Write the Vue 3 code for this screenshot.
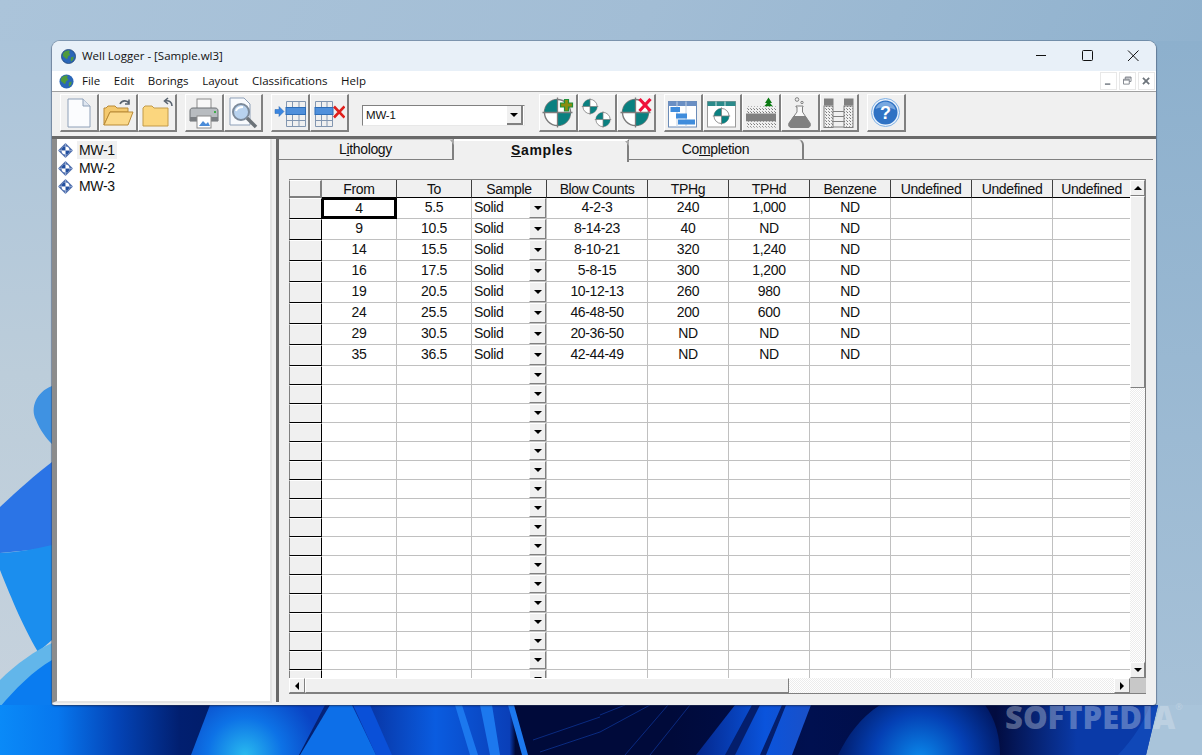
<script setup>
const menus = ['File', 'Edit', 'Borings', 'Layout', 'Classifications', 'Help']
const borings = ['MW-1', 'MW-2', 'MW-3']
const columns = [
  { name: 'From', w: 75 }, { name: 'To', w: 75 }, { name: 'Sample', w: 75 }, { name: 'Blow Counts', w: 101 },
  { name: 'TPHg', w: 81 }, { name: 'TPHd', w: 81 }, { name: 'Benzene', w: 81 },
  { name: 'Undefined', w: 81 }, { name: 'Undefined', w: 81 }, { name: 'Undefined', w: 78 }
]
const filled = [
  ['4', '5.5', 'Solid', '4-2-3', '240', '1,000', 'ND'],
  ['9', '10.5', 'Solid', '8-14-23', '40', 'ND', 'ND'],
  ['14', '15.5', 'Solid', '8-10-21', '320', '1,240', 'ND'],
  ['16', '17.5', 'Solid', '5-8-15', '300', '1,200', 'ND'],
  ['19', '20.5', 'Solid', '10-12-13', '260', '980', 'ND'],
  ['24', '25.5', 'Solid', '46-48-50', '200', '600', 'ND'],
  ['29', '30.5', 'Solid', '20-36-50', 'ND', 'ND', 'ND'],
  ['35', '36.5', 'Solid', '42-44-49', 'ND', 'ND', 'ND']
]
const rows = [...filled.map(r => ({ cells: r, tall: true })), ...Array.from({ length: 17 }, () => ({ cells: [], tall: false }))]
const gridCols = '33px ' + columns.map(c => c.w + 'px').join(' ')
</script>

<template>
  <div class="desktop">
    <svg class="wallpaper" viewBox="0 0 1202 755" preserveAspectRatio="none">
      <defs>
        <linearGradient id="sky" x1="0" y1="0" x2="1" y2="0.3">
          <stop offset="0" stop-color="#abc4da" />
          <stop offset="0.5" stop-color="#a2bdd5" />
          <stop offset="1" stop-color="#8db0cd" />
        </linearGradient>
        <linearGradient id="leftSky" x1="0" y1="0" x2="0" y2="1">
          <stop offset="0" stop-color="#abc4da" />
          <stop offset="0.5" stop-color="#bccdda" />
          <stop offset="1" stop-color="#c6d2dd" />
        </linearGradient>
        <linearGradient id="rightSky" x1="0" y1="0" x2="0" y2="1">
          <stop offset="0" stop-color="#8db0cd" />
          <stop offset="1" stop-color="#a8c2d8" />
        </linearGradient>
        <linearGradient id="band" x1="0" y1="0" x2="1" y2="0">
          <stop offset="0" stop-color="#0a8af8" />
          <stop offset="0.05" stop-color="#0777ee" />
          <stop offset="0.1" stop-color="#0445b8" />
          <stop offset="0.155" stop-color="#011f70" />
          <stop offset="0.25" stop-color="#01185c" />
          <stop offset="0.31" stop-color="#08309c" />
          <stop offset="0.376" stop-color="#0a5ce0" />
          <stop offset="0.44" stop-color="#0a3fb8" />
          <stop offset="0.445" stop-color="#000a3a" />
          <stop offset="0.58" stop-color="#000a3a" />
          <stop offset="0.7" stop-color="#001050" />
          <stop offset="0.86" stop-color="#020c40" />
          <stop offset="0.93" stop-color="#0a3aa8" />
        </linearGradient>
        <radialGradient id="bloomA" gradientUnits="userSpaceOnUse" cx="245" cy="755" r="75">
          <stop offset="0" stop-color="#28b9ef" />
          <stop offset="0.5" stop-color="#0d72e6" />
          <stop offset="1" stop-color="#0a44c4" />
        </radialGradient>
        <radialGradient id="bloomB" gradientUnits="userSpaceOnUse" cx="920" cy="760" r="85">
          <stop offset="0" stop-color="#0a8aec" />
          <stop offset="0.55" stop-color="#0440b4" />
          <stop offset="1" stop-color="#011a66" />
        </radialGradient>
        <linearGradient id="stripe" x1="0" y1="0" x2="1" y2="0">
          <stop offset="0" stop-color="#04278c" />
          <stop offset="0.6" stop-color="#0a54dc" />
          <stop offset="1" stop-color="#1a50c8" />
        </linearGradient>
      </defs>
      <rect width="1202" height="755" fill="url(#sky)" />
      <rect x="0" y="41" width="52" height="664" fill="url(#leftSky)" />
      <rect x="1156" y="41" width="46" height="714" fill="url(#rightSky)" />
      <path d="M52 386C36 392 30 408 36 420C40 430 46 438 52 444Z" fill="#3f92e2" />
      <path d="M0 507C18 490 36 474 52 462V548L0 553Z" fill="#2b74e6" />
      <path d="M0 553C18 552 36 549 52 545V640L38 652C22 625 8 590 0 570Z" fill="#1b8eee" />
      <path d="M0 680C16 664 36 650 52 643V705H0Z" fill="#62b6ea" />
      <path d="M0 707C14 690 34 670 52 660V705H0Z" fill="#0a7cf0" />
      <rect x="0" y="705" width="1158" height="50" fill="url(#band)" />
      <path d="M210 705H325L299 755H191Z" fill="url(#bloomA)" />
      <path d="M330 705H352L376 755H320L300 755Z" fill="#0d6fe8" />
      <path d="M353 705H370L392 755H376Z" fill="#0a50d8" />
      <path d="M455 705H462L478 755H470ZM480 705H492L500 755H490ZM508 705H514L528 755H522Z" fill="#1c78ee" />
      <path d="M533 740L600 717M540 752L600 732M600 715L625 705M600 732L650 705M625 755L668 705M650 755L690 705" stroke="#0a2a80" fill="none" />
      <path d="M696 755L735 705H811L792 755Z" fill="url(#stripe)" />
      <path d="M725 755L752 705H760L735 755ZM760 755L782 705H786L766 755Z" fill="#041e6c" />
      <path d="M838 755C848 735 860 718 880 705H985C996 720 1000 738 1000 755Z" fill="url(#bloomB)" />
      <path d="M1146 755L1158 705H1202V755Z" fill="#a9c4da" />
      <path d="M1118 755C1134 738 1144 722 1150 705L1158 705L1146 755Z" fill="#1048b8" />
    </svg>

    <div class="window">
      <div class="titlebar">
        <svg class="globe" viewBox="0 0 16 16">
          <circle cx="8" cy="8" r="7.500" fill="#2a66b8" />
          <path d="M3 3.500C5 1.500 8 1 9.500 2L8.500 4L10 6L7.500 8L6.500 11L4.500 9.500L2 7.500C1.800 6 2.200 4.600 3 3.500ZM10.500 9L13.500 8L13 11.500L10.500 13.500Z" fill="#4f9a3c" />
          <circle cx="8" cy="8" r="7.500" fill="none" stroke="#1a3f70" stroke-width="0.8" />
        </svg>
        <span class="title">Well Logger - [Sample.wl3]</span>
        <div class="caption">
          <svg viewBox="0 0 46 30"><path d="M18 14.500H28" stroke="#111" /></svg>
          <svg viewBox="0 0 46 30"><rect x="18.500" y="9.500" width="10" height="10" rx="1" fill="none" stroke="#111" /></svg>
          <svg viewBox="0 0 46 30"><path d="M18 9.500L28.500 20M28.500 9.500L18 20" stroke="#111" /></svg>
        </div>
      </div>

      <div class="menubar">
        <svg class="globe small" viewBox="0 0 16 16">
          <circle cx="8" cy="8" r="7.500" fill="#2a66b8" />
          <path d="M3 3.500C5 1.500 8 1 9.500 2L8.500 4L10 6L7.500 8L6.500 11L4.500 9.500L2 7.500C1.800 6 2.200 4.600 3 3.500ZM10.500 9L13.500 8L13 11.500L10.500 13.500Z" fill="#4f9a3c" />
        </svg>
        <span v-for="m in menus" :key="m" class="menu">{{ m }}</span>
        <div class="mdi">
          <span class="mdi-btn"><svg viewBox="0 0 16 18"><path d="M4 12.500H10" stroke="#8a9097" stroke-width="2" /></svg></span>
          <span class="mdi-btn"><svg viewBox="0 0 16 18"><path d="M5.500 7V4.500H12V9.500H10M3.500 7H10V12.500H3.500Z M3.500 8H10M5.500 5.500H12" fill="none" stroke="#7a8087" /></svg></span>
          <span class="mdi-btn"><svg viewBox="0 0 16 18"><path d="M4 5.500L11 12.500M11 5.500L4 12.500" stroke="#6d747b" stroke-width="2" /></svg></span>
        </div>
      </div>

      <div class="toolbar">
        <div class="group">
          <button class="tool">
            <svg viewBox="0 0 32 32"><path d="M5 2H20L27 9V30H5Z" fill="#fbfcfe" stroke="#8ea0b8" /><path d="M20 2V9H27" fill="#dfe6f0" stroke="#8ea0b8" /></svg>
          </button>
          <button class="tool">
            <svg viewBox="0 0 32 32"><path d="M2 28V11H4L6 9H13L15 11H26V15H8Z" fill="#f4c96e" stroke="#b98a36" /><path d="M2 28L8 15H31L26 28Z" fill="#fbd98a" stroke="#b98a36" /><path d="M18 7C20 3 25 3 27 6M27 2.500V7H23" fill="none" stroke="#5a6470" stroke-width="1.600" /></svg>
          </button>
          <button class="tool">
            <svg viewBox="0 0 32 32"><path d="M2 29V11L4 9H11L13 11H27V29Z" fill="#fbd67e" stroke="#c29a48" /><path d="M31 9C31 5 28 3 24 4M27 1L23.500 4L27 7" fill="none" stroke="#5a6470" stroke-width="1.600" /></svg>
          </button>
        </div>
        <div class="group">
          <button class="tool">
            <svg viewBox="0 0 32 32"><rect x="9" y="2" width="14" height="10" fill="#f8f8f8" stroke="#8a8a8a" /><path d="M2 14C2 12 3 11 5 11H27C29 11 30 12 30 14V24H2Z" fill="#b8bcc0" stroke="#6a6e72" /><rect x="2" y="20" width="28" height="4" fill="#7a7e82" /><rect x="26" y="14" width="2" height="2" fill="#3fae4a" /><rect x="9" y="19" width="14" height="12" fill="#fff" stroke="#8a8a8a" /><path d="M11 29L15 24L18 27L20 25L22 29Z" fill="#4b8cd8" /></svg>
          </button>
          <button class="tool">
            <svg viewBox="0 0 32 32"><path d="M3 1H17L23 7V28H3Z" fill="#f8fafd" stroke="#8ea0b8" /><circle cx="14" cy="15" r="8" fill="#b8d2ee" stroke="#7c8a9a" stroke-width="2" /><path d="M9 14C10 11 13 10 16 10" stroke="#fff" stroke-width="2" fill="none" /><path d="M20 21L29 30" stroke="#6c7278" stroke-width="3.500" /></svg>
          </button>
        </div>
        <div class="group">
          <button class="tool">
            <svg viewBox="0 0 32 32"><path d="M12.500 4.500H31.500M12.500 23.500H31.500M12.500 29.500H31.500M12.500 4.500V29.500M18.500 4.500V29.500M25 4.500V29.500M31.500 4.500V29.500" fill="none" stroke="#8296b0" /><rect x="12" y="10.500" width="19.500" height="7" fill="#4e8fdb" stroke="#2d6db8" /><path d="M1 12.500H5V9.500L10 14.500L5 19.500V16.500H1Z" fill="#3b86e0" stroke="#2464b0" stroke-width="0.5" /></svg>
          </button>
          <button class="tool">
            <svg viewBox="0 0 32 32"><path d="M2.500 4.500H19.500M2.500 23.500H19.500M2.500 29.500H19.500M2.500 4.500V29.500M8.500 4.500V29.500M14 4.500V29.500M19.500 4.500V29.500" fill="none" stroke="#8296b0" /><rect x="2" y="10.500" width="18" height="7" fill="#4e8fdb" stroke="#2d6db8" /><path d="M21 9.500L31.500 20.500M31.500 9.500L21 20.500" stroke="#e0201c" stroke-width="2.600" /></svg>
          </button>
        </div>
        <div class="combo">
          <span class="combo-text">MW-1</span>
          <span class="combo-btn"><i class="arrow-down"></i></span>
        </div>
        <div class="group">
          <button class="tool">
            <svg viewBox="0 0 32 32"><use href="#pie" /><path d="M22.500 2.500H26.500V6H30.500V10H26.500V14H22.500V10H18.500V6H22.500Z" fill="#8c8c10" stroke="#1f8f3a" stroke-width="1.200" /></svg>
          </button>
          <button class="tool">
            <svg viewBox="0 0 32 32"><g transform="translate(0.500 1) scale(0.55)"><use href="#pie" /></g><g transform="translate(13.500 14) scale(0.55)"><use href="#pie" /></g></svg>
          </button>
          <button class="tool">
            <svg viewBox="0 0 32 32"><use href="#pie" /><path d="M19.500 2L30.500 14M30.500 2L19.500 14" stroke="#f0103a" stroke-width="3.200" /></svg>
          </button>
        </div>
        <div class="group">
          <button class="tool">
            <svg viewBox="0 0 32 32"><rect x="1.500" y="4.500" width="28" height="25.500" fill="#fff" stroke="#6c8cb8" /><rect x="1.500" y="4.500" width="28" height="4.500" fill="#6a8fc4" /><path d="M10 4.500V9M19 4.500V9M10 9V30M19 9V30" stroke="#c4d0e0" /><rect x="3.500" y="10" width="9.500" height="5" fill="#3f8cdc" /><rect x="9" y="16.500" width="11" height="5" fill="#3f8cdc" /><rect x="11" y="22.500" width="17" height="5" fill="#3f8cdc" /></svg>
          </button>
          <button class="tool">
            <svg viewBox="0 0 32 32"><rect x="1.500" y="4.500" width="28" height="25.500" fill="#fff" stroke="#9a9a9a" /><rect x="1.500" y="4.500" width="28" height="4.500" fill="#2a8a8a" /><path d="M10 4.500V9M19 4.500V9" stroke="#cfe0e0" /><g transform="translate(6.500 10) scale(0.58)"><use href="#pie" /></g></svg>
          </button>
          <button class="tool">
            <svg viewBox="0 0 32 32"><defs><pattern id="dots" width="3" height="3" patternUnits="userSpaceOnUse"><rect width="3" height="3" fill="#f0f0f0" /><rect width="1" height="1" fill="#777" /><rect x="2" y="2" width="1" height="1" fill="#999" /></pattern></defs><path d="M23.500 0.500L27 6H25L28 9.500H19L22 6H20Z" fill="#0a7a12" /><rect x="1" y="9.500" width="30" height="7" fill="url(#dots)" /><rect x="1" y="16.500" width="30" height="8" fill="#808080" /><rect x="1" y="24.500" width="30" height="6" fill="url(#dots)" /></svg>
          </button>
          <button class="tool">
            <svg viewBox="0 0 32 32"><circle cx="13" cy="2.500" r="1.800" fill="none" stroke="#808080" /><circle cx="18" cy="5.500" r="1.200" fill="none" stroke="#808080" /><path d="M12 9H19V10H18.500V15L26 26C27 28 26 30.500 24 30.500H7C5 30.500 4 28 5 26L13 15V10H12Z" fill="#f8f8f8" stroke="#808080" /><path d="M9.500 19H21.500L26 26C27 28 26 30.500 24 30.500H7C5 30.500 4 28 5 26Z" fill="#808080" /></svg>
          </button>
          <button class="tool">
            <svg viewBox="0 0 32 32"><rect x="1" y="9" width="9" height="21.500" fill="url(#dots)" stroke="#808080" /><rect x="21" y="9" width="9" height="21.500" fill="url(#dots)" stroke="#808080" /><rect x="1" y="1.500" width="9.500" height="7" fill="#808080" /><rect x="21" y="1.500" width="9.500" height="7" fill="#808080" /><path d="M10 14.500H21M10 19.500H21M10 24.500H21M10 30H21" stroke="#808080" /></svg>
          </button>
        </div>
        <div class="group">
          <button class="tool">
            <svg viewBox="0 0 32 32"><circle cx="15.500" cy="15.500" r="14" fill="#eaf2fb" stroke="#7fb0e4" /><circle cx="15.500" cy="15.500" r="12" fill="#2f72c4" /><path d="M5.500 12C7.500 6 13.500 4 17.500 5C22.500 6 25.500 10 25.500 13C19.500 10 11.500 10 5.500 12Z" fill="#78a8e0" /><text x="15.500" y="22" text-anchor="middle" class="help-mark">?</text></svg>
          </button>
        </div>
      </div>

      <div class="content">
        <div class="tree">
          <div v-for="(b, i) in borings" :key="b" class="node">
            <svg viewBox="0 0 16 16">
              <path d="M8 0L16 8L8 16L0 8Z" fill="#4f6fae" />
              <circle cx="8" cy="8" r="4.200" fill="#fff" />
              <path d="M8 8V3.800A4.200 4.200 0 0 0 3.800 8ZM8 8V12.200A4.200 4.200 0 0 0 12.200 8Z" fill="#23509f" />
              <path d="M8 0V16M0 8H16" stroke="#9fb2d6" stroke-width="0.8" />
            </svg>
            <span :class="['node-text', { current: i === 0 }]">{{ b }}</span>
          </div>
        </div>

        <div class="pane">
          <div class="tabs">
            <div class="tab">L<u>i</u>thology<i class="notch"></i></div>
            <div class="tab active"><u>S</u>amples<i class="notch"></i></div>
            <div class="tab last">Co<u>m</u>pletion</div>
            <div class="tab-rest"></div>
          </div>

          <div class="sheet">
            <div class="sheet-main">
              <div class="table" :style="{ gridTemplateColumns: gridCols }">
                <div class="corner"></div>
                <div v-for="(c, i) in columns" :key="i" class="head">{{ c.name }}</div>
                <template v-for="(r, ri) in rows" :key="ri">
                  <div class="row-head" :class="{ tall: r.tall }"></div>
                  <div
                    v-for="(c, ci) in columns"
                    :key="ci"
                    class="cell"
                    :class="{ tall: r.tall, select: ci === 2, picked: ri === 0 && ci === 0 }"
                  >
                    <template v-if="ci === 2">
                      <span class="select-text">{{ r.cells[ci] }}</span>
                      <span class="select-btn"><i class="arrow-down"></i></span>
                    </template>
                    <template v-else>{{ r.cells[ci] }}</template>
                  </div>
                </template>
              </div>
              <div class="vscroll">
                <span class="sb-btn"><i class="arrow-up"></i></span>
                <span class="v-thumb"></span>
                <span class="sb-track"></span>
                <span class="sb-btn"><i class="arrow-down"></i></span>
              </div>
            </div>
            <div class="hscroll">
              <span class="sb-btn"><i class="arrow-left"></i></span>
              <span class="h-thumb"></span>
              <span class="sb-track"></span>
              <span class="sb-btn"><i class="arrow-right"></i></span>
              <span class="sb-corner"></span>
            </div>
          </div>
        </div>
      </div>
    </div>

    <div class="watermark">SOFTPEDIA<sup>®</sup></div>

    <svg class="defs" width="0" height="0">
      <defs>
        <g id="pie">
          <circle cx="15.500" cy="15.500" r="13" fill="#fff" stroke="#7c7c7c" stroke-width="1.400" />
          <path d="M15.500 15.500V2.500A13 13 0 0 0 2.500 15.500ZM15.500 15.500V28.500A13 13 0 0 0 28.500 15.500Z" fill="#0a8080" />
          <path d="M15.500 0.500V30.500M0.500 15.500H30.500" stroke="#7c7c7c" stroke-width="1.300" />
        </g>
      </defs>
    </svg>
  </div>
</template>

<style>
html, body { margin: 0; background: #8db0cd; }
</style>

<style scoped>
.desktop { position: relative; width: 1202px; height: 755px; overflow: hidden; font-family: "Liberation Sans", Arial, sans-serif; font-size: 14px; letter-spacing: -0.35px; color: #111; }
.wallpaper { position: absolute; left: 0; top: 0; width: 1202px; height: 755px; }
.defs { position: absolute; }

.window { position: absolute; left: 52px; top: 41px; width: 1104px; height: 664px; display: flex; flex-direction: column; background: #f0f0f0; border-radius: 8px 8px 3px 3px; overflow: hidden; box-shadow: 0 0 0 1px rgba(60, 80, 110, 0.35), 0 1px 2px rgba(0, 0, 40, 0.5); }

.titlebar { height: 30px; flex: none; display: flex; align-items: center; background: #e8f0f8; padding-left: 9px; }
.globe { width: 15px; height: 15px; flex: none; }
.title { margin: 0 0 2px 6px; font-family: "Open Sans", sans-serif; font-size: 11.5px; letter-spacing: 0; }
.caption { margin-left: auto; display: flex; }
.caption svg { width: 46px; height: 30px; display: block; }

.menubar { height: 20px; flex: none; display: flex; align-items: center; background: #fff; padding-left: 7px; border-bottom: 1px solid #a0a0a0; }
.globe.small { margin-right: 8px; }
.menu { font-family: "Open Sans", sans-serif; font-size: 11.5px; letter-spacing: 0; margin: 0 13.6px 2px 0; }
.mdi { margin-left: auto; display: flex; gap: 2px; padding-right: 1px; }
.mdi-btn { width: 17px; height: 18px; box-sizing: border-box; background: #fff; border: 1px solid #e8e8e8; }
.mdi-btn svg { display: block; width: 15px; height: 16px; }

.toolbar { height: 44px; flex: none; display: flex; align-items: center; padding-left: 8px; background: #f0f0f0; border-bottom: 3px solid #696969; box-sizing: content-box; }
.group { display: flex; margin-right: 8px; margin-top: -2px; }
.tool { width: 39px; height: 38px; padding: 0; box-sizing: border-box; background: #f0f0f0; border: 0; border-top: 1px solid #fff; border-left: 1px solid #fff; border-right: 2px solid #808080; border-bottom: 2px solid #808080; display: flex; align-items: center; justify-content: center; }
.tool svg { width: 32px; height: 32px; display: block; }
.help-mark { font: bold 18px "Liberation Sans", sans-serif; fill: #fff; }

.combo { width: 163px; height: 21px; box-sizing: border-box; margin: 3px 14px 0 5px; display: flex; background: #fff; border: 1px solid; border-color: #808080 #e8e8e8 #e8e8e8 #808080; }
.combo-text { flex: 1; padding-left: 3px; font-size: 11.5px; letter-spacing: -0.2px; line-height: 19px; }
.combo-btn { width: 16px; box-sizing: border-box; background: #f0f0f0; border-right: 2px solid #808080; border-bottom: 2px solid #808080; display: flex; align-items: center; justify-content: center; margin-right: 1px; }

.arrow-down { width: 0; height: 0; border: 4px solid transparent; border-top: 4px solid #000; border-bottom: 0; display: block; }
.arrow-up { width: 0; height: 0; border: 4px solid transparent; border-bottom: 4px solid #000; border-top: 0; display: block; }
.arrow-left { width: 0; height: 0; border: 4px solid transparent; border-right: 4px solid #000; border-left: 0; display: block; }
.arrow-right { width: 0; height: 0; border: 4px solid transparent; border-left: 4px solid #000; border-right: 0; display: block; }

.content { flex: 1; min-height: 0; display: flex; }

.tree { width: 220px; flex: none; box-sizing: border-box; margin: 0 4px 2px 0; padding: 2px 0 0 1px; background: #fff; border-left: 5px solid #8c8c8c; border-bottom: 2px solid #e4e4e4; border-right: 2px solid #e4e4e4; }
.node { height: 18px; display: flex; align-items: center; }
.node svg { width: 15px; height: 15px; flex: none; }
.node-text { margin-left: 4px; padding: 0 2px; line-height: 18px; }
.node-text.current { background: #f0f0f0; }

.pane { flex: 1; min-width: 0; box-sizing: border-box; border-left: 3px solid #696969; margin-bottom: 3px; padding-bottom: 8px; display: flex; flex-direction: column; }
.tabs { height: 21px; flex: none; display: flex; margin-bottom: 19px; }
.tab { width: 175px; box-sizing: border-box; height: 21px; text-align: center; line-height: 19px; background: #f0f0f0; border-right: 2px solid #808080; border-bottom: 1px solid #808080; border-top: 1px solid #c8c8c8; position: relative; }
.tab.active { font-weight: bold; background: #f0f0f0; border-bottom: 0; border-top: 2px solid #fff; height: 23px; line-height: 18px; padding-left: 3px; letter-spacing: 0.6px; }
.tab.last { border-top-right-radius: 6px; }
.tab-rest { flex: 1; margin-right: 3px; border-bottom: 1px solid #808080; height: 21px; box-sizing: border-box; }
.notch { position: absolute; right: -6px; top: 0; width: 0; height: 0; border: 4px solid transparent; border-top: 5px solid #a8a8a8; border-bottom: 0; }

.sheet { margin: 0 10px; display: flex; flex-direction: column; flex: 1; min-height: 0; }
.sheet-main { flex: 1; min-height: 0; display: flex; }
.table { flex: 1; min-width: 0; overflow: hidden; display: grid; grid-auto-rows: min-content; align-content: start; border-top: 1px solid #808080; background: #fff; }
.corner, .head, .row-head { background: #f0f0f0; box-sizing: border-box; }
.corner { height: 18px; border: 1px solid #fff; border-right: 2px solid #808080; border-bottom: 2px solid #808080; border-left: 1px solid #808080; }
.head { height: 18px; line-height: 18px; text-align: center; border-right: 1px solid #404040; border-bottom: 1px solid #000; white-space: nowrap; overflow: hidden; }
.row-head { height: 19px; border-left: 1px solid #808080; border-top: 1px solid #fff; border-right: 1px solid #000; border-bottom: 1px solid #000; }
.row-head.tall, .cell.tall { height: 21px; }
.cell { height: 19px; box-sizing: border-box; text-align: center; line-height: 19px; border-right: 1px solid #c0c0c0; border-bottom: 1px solid #c0c0c0; background: #fff; white-space: nowrap; overflow: hidden; }
.cell.select { display: flex; justify-content: space-between; text-align: left; }
.select-text { padding-left: 2px; }
.select-btn { width: 17px; box-sizing: border-box; background: #f0f0f0; border-top: 1px solid #fff; border-left: 1px solid #fff; border-right: 1px solid #808080; border-bottom: 1px solid #808080; display: flex; align-items: center; justify-content: center; }
.cell.picked { border: 2px solid #000; border-right-width: 3px; border-bottom-width: 3px; line-height: 17px; }

.sb-btn { width: 16px; height: 16px; flex: none; box-sizing: border-box; background: #f0f0f0; border-top: 1px solid #fff; border-left: 1px solid #fff; border-right: 1px solid #808080; border-bottom: 1px solid #808080; display: flex; align-items: center; justify-content: center; }
.sb-track { flex: 1; background-color: #f6f6f6; background-image: repeating-conic-gradient(#ececec 0 25%, #fff 0 50%); background-size: 2px 2px; }
.vscroll { width: 16px; flex: none; display: flex; flex-direction: column; box-sizing: border-box; border-top: 1px solid #808080; border-right: 1px solid #808080; }
.vscroll .sb-btn { width: 15px; }
.v-thumb { height: 192px; flex: none; box-sizing: border-box; background: #f0f0f0; border-top: 1px solid #fff; border-left: 1px solid #fff; border-right: 1px solid #808080; border-bottom: 1px solid #808080; }
.hscroll { height: 16px; flex: none; display: flex; border-bottom: 1px solid #808080; box-sizing: border-box; }
.hscroll .sb-btn { height: 15px; }
.h-thumb { width: 484px; flex: none; box-sizing: border-box; background: #f0f0f0; border-top: 1px solid #fff; border-left: 1px solid #fff; border-right: 1px solid #808080; border-bottom: 1px solid #808080; }
.sb-corner { width: 16px; flex: none; background: #c8c8c8; }

.watermark { position: absolute; left: 1005px; top: 700px; font-family: "Open Sans", sans-serif; font-weight: 800; font-size: 31px; letter-spacing: 0; line-height: 34px; white-space: nowrap; color: rgba(225, 232, 240, 0.36); }
.watermark sup { font-size: 9px; font-weight: 400; vertical-align: top; line-height: 14px; }
</style>
